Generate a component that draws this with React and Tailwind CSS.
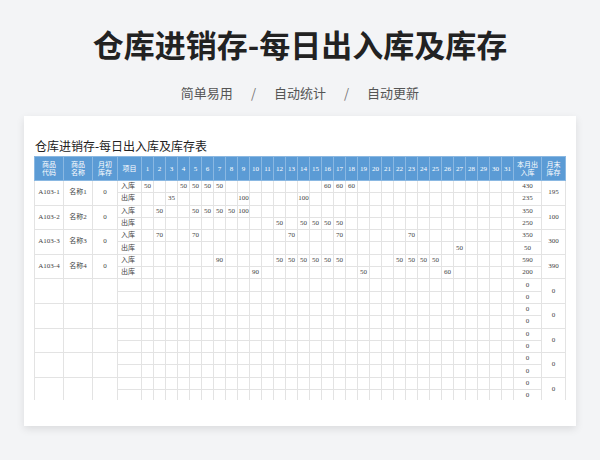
const days = Array.from({ length: 31 }, (_, i) => i + 1);
const data = [
  { code: "A103-1", name: "名称1", in: { 1: 50, 4: 50, 5: 50, 6: 50, 7: 50, 16: 60, 17: 60, 18: 60 }, out: { 3: 35, 9: 100, 14: 100 }, tin: 430, tout: 235, end: 195 },
  { code: "A103-2", name: "名称2", in: { 2: 50, 5: 50, 6: 50, 7: 50, 8: 50, 9: 100 }, out: { 12: 50, 14: 50, 15: 50, 16: 50, 17: 50 }, tin: 350, tout: 250, end: 100 },
  { code: "A103-3", name: "名称3", in: { 2: 70, 5: 70, 13: 70, 17: 70, 23: 70 }, out: { 27: 50 }, tin: 350, tout: 50, end: 300 },
  { code: "A103-4", name: "名称4", in: { 7: 90, 12: 50, 13: 50, 14: 50, 15: 50, 16: 50, 17: 50, 22: 50, 23: 50, 24: 50, 25: 50 }, out: { 10: 90, 19: 50, 26: 60 }, tin: 590, tout: 200, end: 390 },
];
for (let i = 0; i < 5; i++) data.push({ empty: true, in: {}, out: {}, tin: 0, tout: 0, end: 0 });

const bd = "border border-[#e3e3e3]";

export default function App() {
  return (
    <div className="w-[600px] h-[460px] bg-[#f3f4f6] overflow-hidden flex flex-col items-center" style={{ fontFamily: '"Noto Sans CJK SC", sans-serif' }}>
      <div className="mt-[24px] text-[31px] leading-[40px] font-bold text-[#222]">仓库进销存-每日出入库及库存</div>
      <div className="mt-[20px] text-[13px] leading-[18px] text-[#555] flex gap-[18px]">
        <span>简单易用</span><span className="text-[#777]">/</span><span>自动统计</span><span className="text-[#777]">/</span><span>自动更新</span>
      </div>
      <div className="mt-[14px] w-[552px] h-[310px] shrink-0 bg-white shadow-[0_3px_8px_rgba(0,0,0,0.1)] px-[10px] overflow-hidden" style={{ fontFamily: '"Liberation Serif", "Noto Sans CJK SC", serif' }}>
        <div className="mt-[22px] h-[18px] text-[12px] leading-[18px] text-[#222] pl-[1px]">仓库进销存-每日出入库及库存表</div>
        <div className="h-[244px] overflow-hidden">
          <table className="table-fixed border-collapse w-[531px] text-[7px] text-[#444] text-center">
            <colgroup>
              <col className="w-[29px]" /><col className="w-[29px]" /><col className="w-[25px]" /><col className="w-[24px]" />
              {days.map(d => <col key={d} className="w-[12px]" />)}
              <col className="w-[28px]" /><col className="w-[24px]" />
            </colgroup>
            <thead>
              <tr className="h-[24px] bg-[#5b9bd5] text-white leading-[8px]">
                <th className="font-normal border border-[#8ab8e2]">商品<br />代码</th>
                <th className="font-normal border border-[#8ab8e2]">商品<br />名称</th>
                <th className="font-normal border border-[#8ab8e2]">月初<br />库存</th>
                <th className="font-normal border border-[#8ab8e2]">项目</th>
                {days.map(d => <th key={d} className="font-normal border border-[#8ab8e2] p-0">{d}</th>)}
                <th className="font-normal border border-[#8ab8e2]">本月出<br />入库</th>
                <th className="font-normal border border-[#8ab8e2]">月末<br />库存</th>
              </tr>
            </thead>
            <tbody>
              {data.map((r, i) => [
                <tr key={i + "a"} className="h-[12.3px] leading-[11px]">
                  <td rowSpan={2} className={bd}>{r.code}</td>
                  <td rowSpan={2} className={bd}>{r.name}</td>
                  <td rowSpan={2} className={bd}>{r.empty ? "" : "0"}</td>
                  <td className={bd + " text-left pl-[3px]"}>{r.empty ? "" : "入库"}</td>
                  {days.map(d => <td key={d} className={bd + " p-0"}>{r.in[d] ?? ""}</td>)}
                  <td className={bd}>{r.tin}</td>
                  <td rowSpan={2} className={bd}>{r.end}</td>
                </tr>,
                <tr key={i + "b"} className="h-[12.3px] leading-[11px]">
                  <td className={bd + " text-left pl-[3px]"}>{r.empty ? "" : "出库"}</td>
                  {days.map(d => <td key={d} className={bd + " p-0"}>{r.out[d] ?? ""}</td>)}
                  <td className={bd}>{r.tout}</td>
                </tr>,
              ])}
            </tbody>
          </table>
        </div>
      </div>
    </div>
  );
}
